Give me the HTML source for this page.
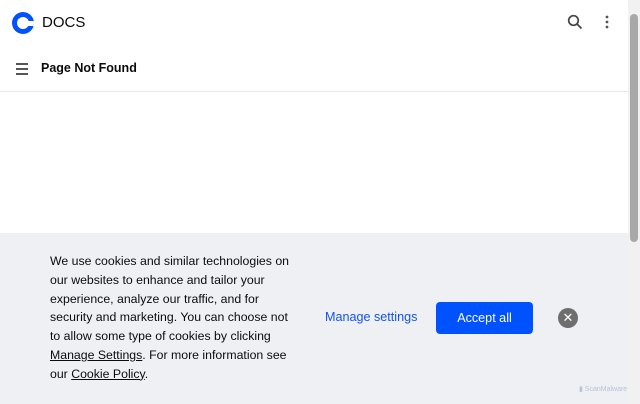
<!DOCTYPE html>
<html><head><style>
*{margin:0;padding:0;box-sizing:border-box}
body{width:640px;height:404px;overflow:hidden;font-family:"Liberation Sans",sans-serif;background:#fff;position:relative;color:#0a0b0d}
.hdr{position:absolute;left:0;top:0;width:628px;height:92px;border-bottom:1px solid #e6e8eb}
.logo{position:absolute;left:12px;top:12px;width:22px;height:22px;border-radius:50%;background:#0052ff;overflow:hidden}
.logo:after{content:"";position:absolute;left:5px;top:5px;width:12px;height:12px;border-radius:50%;background:#fff}
.logo:before{content:"";position:absolute;left:11px;top:8.5px;width:12px;height:5px;background:#fff;z-index:1}
.docs{position:absolute;left:42px;top:14px;font-size:15px}
.pnf{position:absolute;left:41px;top:61px;font-size:12.5px;font-weight:bold}
.ham{position:absolute;left:16px;top:63px;width:12px}
.ham i{display:block;height:1.5px;background:#555;margin-bottom:3.5px}
.sb{position:absolute;right:0;top:0;width:12px;height:404px;background:#f1f1f1}
.thumb{position:absolute;left:2px;top:14px;width:8px;height:228px;background:#a8a8a8;border-radius:4px}
.ban{position:absolute;left:0;top:233px;width:628px;height:171px;background:#eef0f3}
.txt{position:absolute;left:50px;top:19px;width:245px;font-size:12.3px;line-height:18.8px;color:#0a0b0d}
.txt u{text-decoration:underline}
.ms{position:absolute;left:325px;top:77px;font-size:12.6px;color:#1652f0}
.acc{position:absolute;left:436px;top:69px;width:97px;height:32px;background:#0052ff;border-radius:4px;color:#fff;font-size:12.6px;text-align:center;line-height:32px}
.x{position:absolute;left:558px;top:75px;width:20px;height:20px;border-radius:50%;background:#6e6e6e;color:#fff;text-align:center;font-size:13px;line-height:20px}
.wm{position:absolute;left:579px;top:152px;font-size:7px;color:#b7c3d6}
</style></head><body>
<div class="hdr">
<div class="logo"></div><div class="docs">DOCS</div>
<svg style="position:absolute;left:567px;top:14px" width="16" height="16" viewBox="0 0 16 16"><circle cx="6.5" cy="6.5" r="4.8" stroke="#444" stroke-width="1.7" fill="none"/><path d="M10 10l4.5 4.5" stroke="#444" stroke-width="1.8"/></svg>
<svg style="position:absolute;left:605px;top:15px" width="4" height="14"><circle cx="2" cy="2" r="1.4" fill="#555"/><circle cx="2" cy="7" r="1.4" fill="#555"/><circle cx="2" cy="12" r="1.4" fill="#555"/></svg>
<div class="ham"><i></i><i></i><i></i></div>
<div class="pnf">Page Not Found</div>
</div>
<div class="ban">
<div class="txt">We use cookies and similar technologies on our websites to enhance and tailor your experience, analyze our traffic, and for security and marketing. You can choose not to allow some type of cookies by clicking <u>Manage Settings</u>. For more information see our <u>Cookie Policy</u>.</div>
<div class="ms">Manage settings</div>
<div class="acc">Accept all</div>
<div class="x">✕</div>
<div class="wm">▮ ScanMalware</div>
</div>
<div class="sb"><div class="thumb"></div></div>
</body></html>
